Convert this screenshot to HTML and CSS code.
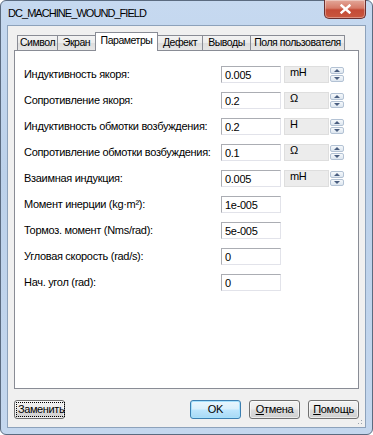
FILE: index.html
```html
<!DOCTYPE html>
<html>
<head>
<meta charset="utf-8">
<link rel="stylesheet" href="styles.css">
</head>
<body>
<div class="window">
  <div class="titlebar">
    <span class="title">DC_MACHINE_WOUND_FIELD</span>
    <div class="close">
      <svg width="11" height="10" viewBox="0 0 11 10"><path d="M1.5 1.5 L9.5 8.5 M9.5 1.5 L1.5 8.5" stroke="#fff" stroke-width="2.4" stroke-linecap="square"/></svg>
    </div>
  </div>
  <div class="client">
    <div class="tabs">
      <div class="tab t-symbol">Символ</div>
      <div class="tab t-screen">Экран</div>
      <div class="tab active t-params">Параметры</div>
      <div class="tab t-defect">Дефект</div>
      <div class="tab t-pins">Выводы</div>
      <div class="tab last t-user">Поля пользователя</div>
    </div>
    <div class="panel">
      <div class="row"><span class="label">Индуктивность якоря:</span><span class="field">0.005</span><span class="unit">mH</span><span class="spin"><i class="sb up"></i><i class="sb down"></i></span></div>
      <div class="row"><span class="label">Сопротивление якоря:</span><span class="field">0.2</span><span class="unit">Ω</span><span class="spin"><i class="sb up"></i><i class="sb down"></i></span></div>
      <div class="row"><span class="label">Индуктивность обмотки возбуждения:</span><span class="field">0.2</span><span class="unit">H</span><span class="spin"><i class="sb up"></i><i class="sb down"></i></span></div>
      <div class="row"><span class="label">Сопротивление обмотки возбуждения:</span><span class="field">0.1</span><span class="unit">Ω</span><span class="spin"><i class="sb up"></i><i class="sb down"></i></span></div>
      <div class="row"><span class="label">Взаимная индукция:</span><span class="field">0.005</span><span class="unit">mH</span><span class="spin"><i class="sb up"></i><i class="sb down"></i></span></div>
      <div class="row"><span class="label">Момент инерции (kg·m²):</span><span class="field">1e-005</span></div>
      <div class="row"><span class="label">Тормоз. момент (Nms/rad):</span><span class="field">5e-005</span></div>
      <div class="row"><span class="label">Угловая скорость (rad/s):</span><span class="field">0</span></div>
      <div class="row"><span class="label">Нач. угол (rad):</span><span class="field">0</span></div>
    </div>
    <div class="buttons">
      <div class="btn focus"><span class="focusring">Заменить</span></div>
      <div class="btn default">OK</div>
      <div class="btn"><u>О</u>тмена</div>
      <div class="btn"><u>П</u>омощь</div>
    </div>
    <div class="grip"></div>
  </div>
</div>
</body>
</html>
```
FILE: styles.css
```css
* { box-sizing: border-box; }
html, body { margin: 0; padding: 0; background: #fff; }
body { width: 373px; height: 435px; overflow: hidden; font-family: "Liberation Sans", Arial, sans-serif; font-size: 11px; letter-spacing: -0.3px; color: #000; }

.window {
  width: 373px; height: 435px;
  border: 1px solid #5b6b80;
  border-radius: 6px;
  background: linear-gradient(#c6d9f0, #bcd1ea 40%, #c4d7ee);
  display: flex; flex-direction: column;
}
.titlebar {
  height: 24px; flex: none;
  display: flex; align-items: flex-start;
  position: relative;
}
.title {
  margin: 6px 0 0 7px;
  font-size: 11px; letter-spacing: -0.95px; line-height: 13px;
  color: #000;
}
.close {
  position: absolute; right: 6px; top: -1px;
  width: 42px; height: 19px;
  border: 1px solid #6a3030;
  border-top: none;
  border-radius: 0 0 5px 5px;
  background: linear-gradient(#e3a89a, #d67a68 45%, #c44a36 55%, #c9573f);
  display: flex; align-items: center; justify-content: center;
  box-shadow: inset 0 0 0 1px rgba(255,255,255,0.35);
}

.client {
  flex: 1;
  margin: 0 6px 6px;
  border: 1px solid #8da2bb;
  background: #f0f0f0;
  display: flex; flex-direction: column;
  position: relative;
}

.tabs {
  display: flex; align-items: flex-end;
  height: 24px; padding: 6px 0 0 9px;
}
.tab {
  height: 15px; line-height: 13px;
  text-align: center;
  font-size: 10.5px; letter-spacing: -0.45px;
  border: 1px solid #898c95; border-bottom: none; border-right: none;
  background: linear-gradient(#f3f3f3, #ebebeb 50%, #dddddd 51%, #e6e6e6);
  white-space: nowrap;
}
.t-symbol { width: 40px; }
.t-screen { width: 38px; }
.t-params { width: 63px; }
.t-defect { width: 44px; }
.t-pins { width: 48px; }
.t-user { width: 95px; }
.tab.last { border-right: 1px solid #898c95; }
.tab.active {
  height: 19px; margin-bottom: -1px; padding-top: 1px;
  background: #fff;
  border-right: 1px solid #898c95;
  position: relative; z-index: 1;
  line-height: 13px;
}
.tab.active + .tab { border-left: none; }

.panel {
  margin: 0 6px;
  height: 339px;
  border: 1px solid #898c95;
  background: #fff;
  padding: 15px 0 0 9px;
  display: flex; flex-direction: column; gap: 9px;
}
.row {
  display: grid;
  grid-template-columns: 197px 60px 48px 15px;
  column-gap: 0;
  height: 17px; align-items: start;
}
.label { line-height: 17px; white-space: nowrap; }
.field {
  height: 17px; line-height: 15px;
  padding: 1px 0 0 3px;
  border: 1px solid #e2e3ea;
  border-top-color: #abadb3; border-left-color: #abadb3;
  background: #fff;
}
.unit {
  margin-left: 3px;
  height: 17px;
  padding: 0 0 0 5px;
  line-height: 11px;
  border: 1px solid #dedede;
  background: #ececec;
}
.spin {
  margin-left: 1px; margin-top: 1px;
  width: 15px; height: 15px;
  display: flex; flex-direction: column; gap: 1px;
}
.sb {
  display: flex; align-items: center; justify-content: center;
  height: 7px; width: 14px;
  border: 1px solid #b3c2d4; border-radius: 2px;
  background: linear-gradient(#f6f9fc, #dde6ef);
}
.sb::after {
  content: ""; width: 0; height: 0;
  border-left: 3px solid transparent; border-right: 3px solid transparent;
}
.sb.up::after { border-bottom: 3px solid #4a5e80; }
.sb.down::after { border-top: 3px solid #4a5e80; }

.buttons {
  display: flex; gap: 8px;
  margin-top: 11px; padding: 0 6px;
}
.btn {
  width: 51px; height: 19px;
  border: 1px solid #707070; border-radius: 3px;
  background: linear-gradient(#f2f2f2, #ebebeb 48%, #dddddd 52%, #cfcfcf);
  display: flex; align-items: center; justify-content: center;
  line-height: 13px;
  box-shadow: inset 0 0 0 1px rgba(255,255,255,0.6);
}
.btn.focus { justify-content: flex-start; padding: 2px; }
.focusring {
  flex: 1; height: 13px;
  outline: 1px dotted #000;
  line-height: 13px; padding-left: 1px;
  letter-spacing: -0.4px;
}
.btn.default {
  margin-left: auto;
  border-color: #3c7fb1;
  background: linear-gradient(#eaf6fd, #d9f0fc 48%, #bee6fd 52%, #a7d9f5);
  box-shadow: inset 0 0 0 1px #a6e1fd;
}
.btn u { text-decoration: underline; }

.grip {
  position: absolute; right: 1px; bottom: 1px;
  width: 10px; height: 10px;
  background:
    radial-gradient(circle, #9aa3ad 0.8px, transparent 1px) 0 0 / 3px 3px;
  clip-path: polygon(100% 0, 100% 100%, 0 100%);
}
```
